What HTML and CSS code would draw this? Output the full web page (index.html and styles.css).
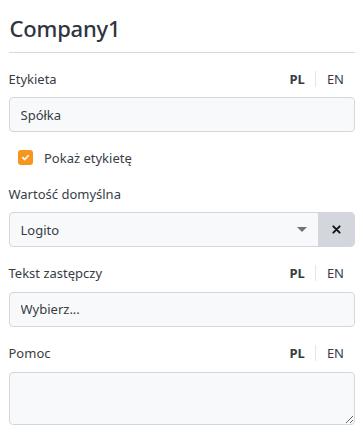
FILE: index.html
```html
<!DOCTYPE html>
<html>
  <head>
    <title>Company1</title>
    <link rel="stylesheet" href="styles.css">
  </head>
  <body>
    <h1 class="title">Company1</h1>

    <div class="field first">
      <div class="field-head">
        <label>Etykieta</label>
        <div class="langs"><span class="lang active">PL</span><span class="lang">EN</span></div>
      </div>
      <input class="control" type="text" value="Spółka">
    </div>

    <div class="check">
      <span class="box">
        <svg width="9" height="9" viewBox="0 0 10 10"><path d="M2 5.2 L4.2 7.3 L8 3" fill="none" stroke="#fff" stroke-width="1.8" stroke-linecap="round" stroke-linejoin="round"/></svg>
      </span>
      <span>Pokaż etykietę</span>
    </div>

    <div class="field after-check">
      <div class="field-head">
        <label>Wartość domyślna</label>
      </div>
      <div class="select">
        <div class="select-value">Logito</div>
        <span class="caret"></span>
        <button class="clear">
          <svg width="9" height="9" viewBox="0 0 10 10"><path d="M1.5 1.5 L8.5 8.5 M8.5 1.5 L1.5 8.5" stroke="#111" stroke-width="2.1" stroke-linecap="round"/></svg>
        </button>
      </div>
    </div>

    <div class="field">
      <div class="field-head">
        <label>Tekst zastępczy</label>
        <div class="langs"><span class="lang active">PL</span><span class="lang">EN</span></div>
      </div>
      <input class="control" type="text" value="Wybierz...">
    </div>

    <div class="field last">
      <div class="field-head">
        <label>Pomoc</label>
        <div class="langs"><span class="lang active">PL</span><span class="lang">EN</span></div>
      </div>
      <textarea class="control area"></textarea>
    </div>
  </body>
</html>
```

FILE: styles.css
```css
body {
  margin: 0;
  padding: 0 8px 0 8.5px;
  font-family: "Noto Sans", sans-serif;
  font-size: 13px;
  color: #373d45;
  background: #ffffff;
}

.title {
  margin: 0;
  padding: 15px 0 10px 1px;
  font-size: 22px;
  font-weight: 500;
  letter-spacing: -0.2px;
  color: #2f3540;
  line-height: 27px;
  border-bottom: 1px solid #d5d8de;
}

.field {
  margin-top: 15.5px;
}
.field.first {
  margin-top: 15px;
}
.field.after-check {
  margin-top: 18px;
}
.field.last {
  margin-top: 16px;
}

/* label row with language switch */
.field-head {
  display: flex;
  justify-content: space-between;
  align-items: center;
  height: 21px;
  margin-bottom: 8px;
}

.langs {
  display: flex;
  align-items: center;
  padding-right: 11px;
}
.lang {
  font-size: 13px;
  color: #373d45;
}
.lang.active {
  font-weight: 700;
  padding-right: 10px;
  margin-right: 11px;
  border-right: 1px solid #e2e5e9;
  line-height: 16px;
}

.control {
  display: block;
  box-sizing: border-box;
  width: 100%;
  height: 35px;
  padding: 0 11px;
  font-family: inherit;
  font-size: 13px;
  color: #373d45;
  background: #f8f9fa;
  border: 1px solid #d3d7dd;
  border-radius: 4px;
  outline: none;
}
.area {
  height: 53px;
  resize: vertical;
}

/* checkbox row */
.check {
  display: flex;
  align-items: center;
  gap: 11px;
  margin: 18px 0 0 9.5px;
  height: 15px;
}
.box {
  width: 15px;
  height: 15px;
  border-radius: 3px;
  background: #f7951e;
  display: flex;
  align-items: center;
  justify-content: center;
}

/* select with clear button */
.select {
  display: flex;
  align-items: center;
  height: 35px;
  box-sizing: border-box;
  border: 1px solid #d3d7dd;
  border-radius: 4px;
  background: #f8f9fa;
  overflow: hidden;
}
.select-value {
  flex: 1;
  padding-left: 11px;
}
.caret {
  width: 0;
  height: 0;
  border-left: 5px solid transparent;
  border-right: 5px solid transparent;
  border-top: 5px solid #6c737c;
  margin-right: 11px;
}
.clear {
  width: 36px;
  height: 100%;
  border: none;
  background: #d3d7dd;
  padding: 0;
  display: flex;
  align-items: center;
  justify-content: center;
}
```
